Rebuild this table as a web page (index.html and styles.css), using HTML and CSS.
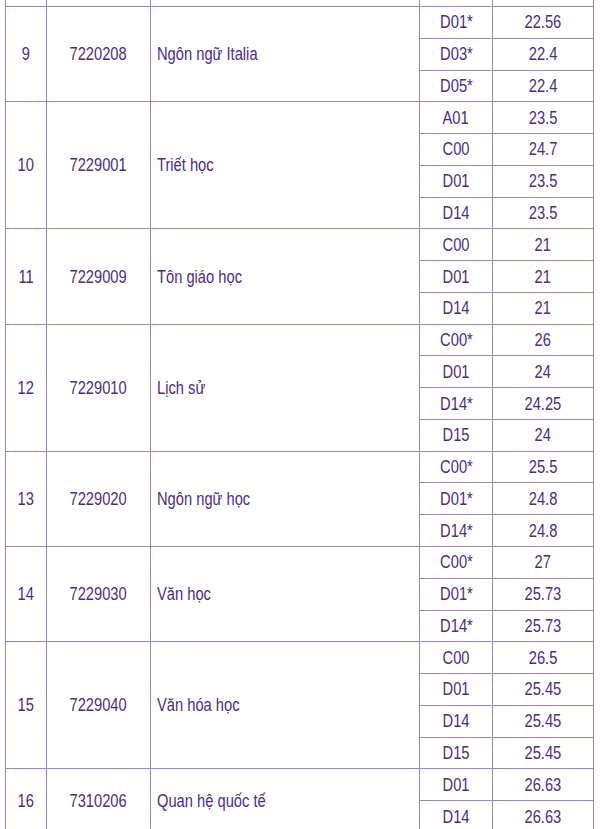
FILE: index.html
```html
<!DOCTYPE html>
<html lang="vi">
<head>
<meta charset="utf-8">
<title>Điểm chuẩn</title>
<link rel="stylesheet" href="styles.css">
</head>
<body>
<table class="scores">
  <colgroup>
    <col class="c-no"><col class="c-code"><col class="c-name"><col class="c-grp"><col class="c-pt">
  </colgroup>
  <tbody>
    <tr class="tail"><td></td><td></td><td></td><td></td><td></td></tr>

    <tr><td rowspan="3"><span class="t">9</span></td><td rowspan="3"><span class="t">7220208</span></td><td rowspan="3" class="name"><span class="t">Ngôn ngữ Italia</span></td><td><span class="t">D01*</span></td><td><span class="t">22.56</span></td></tr>
    <tr><td><span class="t">D03*</span></td><td><span class="t">22.4</span></td></tr>
    <tr><td><span class="t">D05*</span></td><td><span class="t">22.4</span></td></tr>

    <tr><td rowspan="4"><span class="t">10</span></td><td rowspan="4"><span class="t">7229001</span></td><td rowspan="4" class="name"><span class="t">Triết học</span></td><td><span class="t">A01</span></td><td><span class="t">23.5</span></td></tr>
    <tr><td><span class="t">C00</span></td><td><span class="t">24.7</span></td></tr>
    <tr><td><span class="t">D01</span></td><td><span class="t">23.5</span></td></tr>
    <tr><td><span class="t">D14</span></td><td><span class="t">23.5</span></td></tr>

    <tr><td rowspan="3"><span class="t">11</span></td><td rowspan="3"><span class="t">7229009</span></td><td rowspan="3" class="name"><span class="t">Tôn giáo học</span></td><td><span class="t">C00</span></td><td><span class="t">21</span></td></tr>
    <tr><td><span class="t">D01</span></td><td><span class="t">21</span></td></tr>
    <tr><td><span class="t">D14</span></td><td><span class="t">21</span></td></tr>

    <tr><td rowspan="4"><span class="t">12</span></td><td rowspan="4"><span class="t">7229010</span></td><td rowspan="4" class="name"><span class="t">Lịch sử</span></td><td><span class="t">C00*</span></td><td><span class="t">26</span></td></tr>
    <tr><td><span class="t">D01</span></td><td><span class="t">24</span></td></tr>
    <tr><td><span class="t">D14*</span></td><td><span class="t">24.25</span></td></tr>
    <tr><td><span class="t">D15</span></td><td><span class="t">24</span></td></tr>

    <tr><td rowspan="3"><span class="t">13</span></td><td rowspan="3"><span class="t">7229020</span></td><td rowspan="3" class="name"><span class="t">Ngôn ngữ học</span></td><td><span class="t">C00*</span></td><td><span class="t">25.5</span></td></tr>
    <tr><td><span class="t">D01*</span></td><td><span class="t">24.8</span></td></tr>
    <tr><td><span class="t">D14*</span></td><td><span class="t">24.8</span></td></tr>

    <tr><td rowspan="3"><span class="t">14</span></td><td rowspan="3"><span class="t">7229030</span></td><td rowspan="3" class="name"><span class="t">Văn học</span></td><td><span class="t">C00*</span></td><td><span class="t">27</span></td></tr>
    <tr><td><span class="t">D01*</span></td><td><span class="t">25.73</span></td></tr>
    <tr><td><span class="t">D14*</span></td><td><span class="t">25.73</span></td></tr>

    <tr><td rowspan="4"><span class="t">15</span></td><td rowspan="4"><span class="t">7229040</span></td><td rowspan="4" class="name"><span class="t">Văn hóa học</span></td><td><span class="t">C00</span></td><td><span class="t">26.5</span></td></tr>
    <tr><td><span class="t">D01</span></td><td><span class="t">25.45</span></td></tr>
    <tr><td><span class="t">D14</span></td><td><span class="t">25.45</span></td></tr>
    <tr><td><span class="t">D15</span></td><td><span class="t">25.45</span></td></tr>

    <tr><td rowspan="2"><span class="t">16</span></td><td rowspan="2"><span class="t">7310206</span></td><td rowspan="2" class="name"><span class="t">Quan hệ quốc tế</span></td><td><span class="t">D01</span></td><td><span class="t">26.63</span></td></tr>
    <tr><td><span class="t">D14</span></td><td><span class="t">26.63</span></td></tr>
  </tbody>
</table>
</body>
</html>
```

FILE: styles.css
```css
html, body {
  margin: 0;
  padding: 0;
  background: #ffffff;
}

body {
  padding-left: 5px;
  font-family: "Liberation Sans", Arial, sans-serif;
  font-size: 17.5px;
  color: #4b2a93;
}

.scores {
  border-collapse: collapse;
  table-layout: fixed;
  width: 588px;
}

.c-no { width: 41px; }
.c-code { width: 104px; }
.c-name { width: 269px; }
.c-grp { width: 73px; }
.c-pt { width: 101px; }

.scores td {
  border: 1px solid #9780d6;
  height: 30.78px;
  padding: 0;
  text-align: center;
  vertical-align: middle;
  line-height: 20px;
}

.scores td.name {
  text-align: left;
  padding-left: 6px;
}

.t {
  display: inline-block;
  transform: scaleX(0.84);
  transform-origin: center;
  white-space: nowrap;
}

.name .t {
  transform-origin: left center;
}

.scores tr.tail td {
  height: 6px;
  border-top: none;
}
```
